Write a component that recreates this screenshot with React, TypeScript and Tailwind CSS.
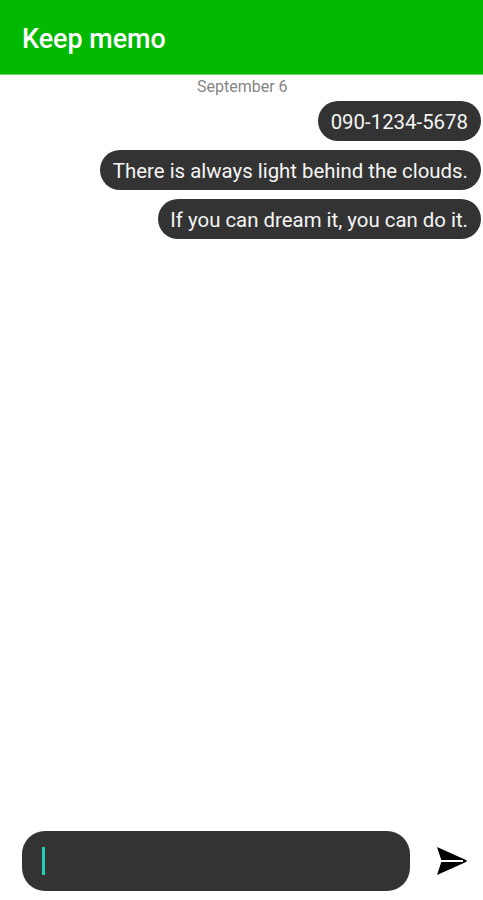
import React, { useState } from "react";

const memos = [
  "090-1234-5678",
  "There is always light behind the clouds.",
  "If you can dream it, you can do it.",
];

export default function App() {
  const [items] = useState<string[]>(memos);

  return (
    <div className="w-full h-screen flex flex-col bg-white font-['Roboto',sans-serif] overflow-hidden">
      {/* App bar */}
      <header className="h-[75px] shrink-0 bg-[#00b900] border-b border-[#6fd96f] flex items-center pl-[22px] pt-[5px]">
        <h1 className="text-white text-[26.9px] leading-none font-medium">Keep memo</h1>
      </header>

      {/* Memo list */}
      <main className="flex-1 flex flex-col pr-[2.5px]">
        <div className="h-[25.6px] pl-1 text-center text-[16px] leading-[24px] text-[#858585]">September 6</div>
        <div className="flex flex-col items-end gap-[8.4px]">
          {items.map((text) => (
            <div
              key={text}
              className="h-[40.6px] rounded-full bg-[#333333] px-[12.5px] pt-[3px] flex items-center text-[#f5f5f5] text-[20.4px] leading-6 whitespace-nowrap"
            >
              {text}
            </div>
          ))}
        </div>
      </main>

      {/* Input row */}
      <footer className="shrink-0 flex items-center pl-[22px] pb-[9px]">
        <div className="w-[388px] h-[60px] rounded-[23px] bg-[#333333] flex items-center pl-5">
          <span className="w-[3px] h-[28px] bg-[#22cfb8]" />
        </div>
        <button type="button" aria-label="Send" className="ml-[27px]">
          <svg width="30" height="28" viewBox="0 0 30 28" fill="#000">
            <path d="M0 0 29 13H4.3zM0 28 29 15H4.3zM26 13H29L30 14 29 15H26z" />
          </svg>
        </button>
      </footer>
    </div>
  );
}
